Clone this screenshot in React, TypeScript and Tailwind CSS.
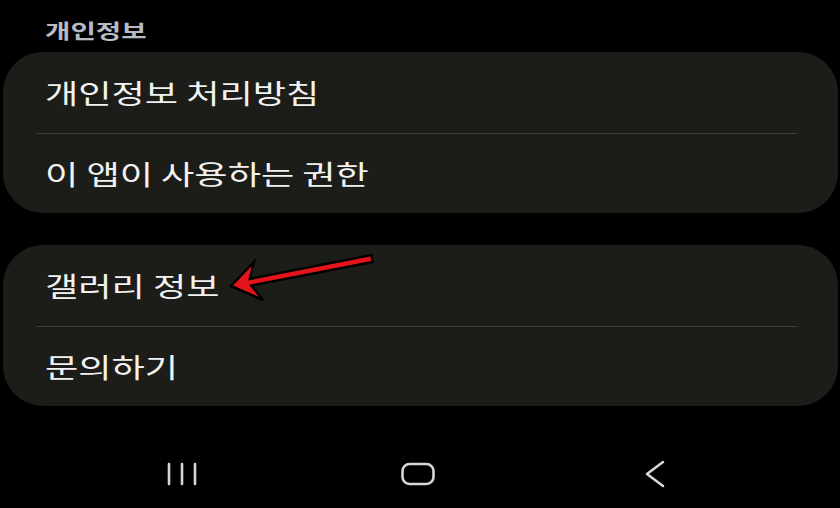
import React from 'react';

const font = { fontFamily: '"Noto Sans CJK KR", "Noto Sans", sans-serif' };

function Row({ label, height }: { label: string; height: string }) {
  return (
    <div className={`flex items-center pl-[42px] ${height}`}>
      <span className="inline-block origin-left scale-x-[1.34] text-[27px] leading-[32px] font-normal text-[#f2f2f2]">{label}</span>
    </div>
  );
}

function Divider() {
  return <div className="h-px ml-[33px] mr-[41px] bg-[#3d3e3a]" />;
}

function Card({ items }: { items: string[] }) {
  return (
    <div className="ml-[3px] mr-[2px] rounded-[40px] bg-[#1c1d18]">
      <Row label={items[0]} height="h-[81px]" />
      <Divider />
      <Row label={items[1]} height="h-[79px]" />
    </div>
  );
}

export default function App() {
  return (
    <div className="relative w-[840px] h-[508px] bg-black overflow-hidden flex flex-col" style={font}>
      {/* section header */}
      <div className="h-[52px] pl-[45px] pt-[19px]">
        <span className="inline-block origin-left scale-x-[1.38] text-[20px] leading-[24px] font-bold text-[#b6bbc5]">개인정보</span>
      </div>

      <Card items={['개인정보 처리방침', '이 앱이 사용하는 권한']} />
      <div className="h-[32px]" />
      <Card items={['갤러리 정보', '문의하기']} />

      {/* navigation bar */}
      <div className="flex-1 grid grid-cols-3 pl-[64px] pr-[67px] items-center pt-[34px]">
        <div className="flex justify-center">
          <svg width="32" height="26" viewBox="0 0 32 26" fill="none" stroke="#d6d6d6" strokeWidth="2.6" strokeLinecap="round">
            <line x1="3" y1="3" x2="3" y2="23" />
            <line x1="16" y1="3" x2="16" y2="23" />
            <line x1="29" y1="3" x2="29" y2="23" />
          </svg>
        </div>
        <div className="flex justify-center">
          <svg width="36" height="26" viewBox="0 0 36 26" fill="none" stroke="#d6d6d6" strokeWidth="2.6">
            <rect x="2.5" y="3" width="31" height="20" rx="7" />
          </svg>
        </div>
        <div className="flex justify-center">
          <svg width="22" height="28" viewBox="0 0 22 28" fill="none" stroke="#d6d6d6" strokeWidth="2.6" strokeLinecap="round" strokeLinejoin="round">
            <polyline points="19,2 3,14 19,26" />
          </svg>
        </div>
      </div>

      {/* annotation arrow */}
      <svg className="absolute left-0 top-0 pointer-events-none" width="840" height="508" viewBox="0 0 840 508">
        <polygon
          points="231,286 254,262 249.9,278.8 371.3,255.1 372.7,261.9 251.3,285.6 263,300"
          fill="#e4141b"
          stroke="#000"
          strokeWidth="2.5"
          strokeLinejoin="miter"
        />
      </svg>
    </div>
  );
}
